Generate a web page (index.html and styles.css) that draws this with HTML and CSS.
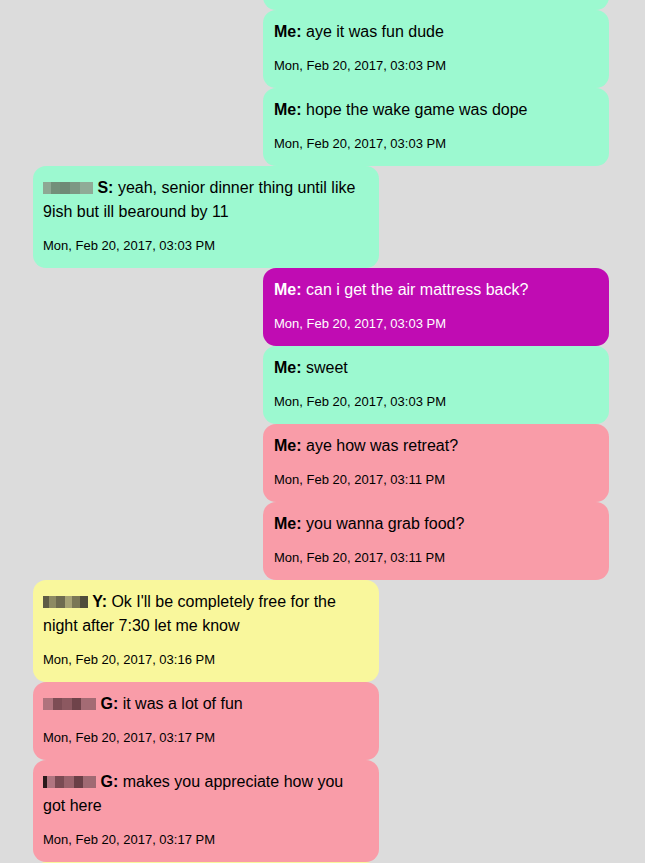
FILE: index.html
```html
<!DOCTYPE html>
<html>
<head>
<meta charset="utf-8">
<link rel="stylesheet" href="styles.css">
</head>
<body>
<div class="thread">
  <div class="msg me green">
    <div class="text"><b>Me:</b> lol</div>
    <div class="time">Mon, Feb 20, 2017, 03:03 PM</div>
  </div>
  <div class="msg me green">
    <div class="text"><b>Me:</b> aye it was fun dude</div>
    <div class="time">Mon, Feb 20, 2017, 03:03 PM</div>
  </div>
  <div class="msg me green">
    <div class="text"><b>Me:</b> hope the wake game was dope</div>
    <div class="time">Mon, Feb 20, 2017, 03:03 PM</div>
  </div>
  <div class="msg them green">
    <div class="text"><b><span class="blur blur-s"></span> S:</b> yeah, senior dinner thing until like 9ish but ill bearound by 11</div>
    <div class="time">Mon, Feb 20, 2017, 03:03 PM</div>
  </div>
  <div class="msg me purple">
    <div class="text"><b>Me:</b> can i get the air mattress back?</div>
    <div class="time">Mon, Feb 20, 2017, 03:03 PM</div>
  </div>
  <div class="msg me green">
    <div class="text"><b>Me:</b> sweet</div>
    <div class="time">Mon, Feb 20, 2017, 03:03 PM</div>
  </div>
  <div class="msg me pink">
    <div class="text"><b>Me:</b> aye how was retreat?</div>
    <div class="time">Mon, Feb 20, 2017, 03:11 PM</div>
  </div>
  <div class="msg me pink">
    <div class="text"><b>Me:</b> you wanna grab food?</div>
    <div class="time">Mon, Feb 20, 2017, 03:11 PM</div>
  </div>
  <div class="msg them yellow">
    <div class="text"><b><span class="blur blur-y"></span> Y:</b> Ok I'll be completely free for the night after 7:30 let me know</div>
    <div class="time">Mon, Feb 20, 2017, 03:16 PM</div>
  </div>
  <div class="msg them pink">
    <div class="text"><b><span class="blur blur-g"></span> G:</b> it was a lot of fun</div>
    <div class="time">Mon, Feb 20, 2017, 03:17 PM</div>
  </div>
  <div class="msg them pink">
    <div class="text"><b><span class="blur blur-g2"></span> G:</b> makes you appreciate how you got here</div>
    <div class="time">Mon, Feb 20, 2017, 03:17 PM</div>
  </div>
  <div class="msg them yellow">
    <div class="text"><b><span class="blur blur-y"></span> Y:</b> yeah</div>
    <div class="time">Mon, Feb 20, 2017, 03:18 PM</div>
  </div>
</div>
</body>
</html>
```
FILE: styles.css
```css
html, body {
  margin: 0;
  padding: 0;
  background: #dcdcdc;
  font-family: "Liberation Sans", Arial, Helvetica, sans-serif;
  overflow: hidden;
}

.thread {
  width: 576px;
  margin: -68px 0 0 33px;
  display: flex;
  flex-direction: column;
}

.msg {
  width: 346px;
  box-sizing: border-box;
  padding: 10px 10px 15px 11px;
  border-radius: 13px;
  color: #000;
}

.msg.me {
  align-self: flex-end;
}

.msg.them {
  align-self: flex-start;
  padding-left: 10px;
}

.text {
  font-size: 16px;
  line-height: 24px;
}

.time {
  font-size: 13px;
  line-height: 14px;
  margin-top: 15px;
}

.green { background: #9cf9d0; }
.pink { background: #f99ca8; }
.yellow { background: #f9f79c; }
.purple { background: #c00cb3; color: #fff; }

.blur {
  display: inline-block;
  height: 12px;
  vertical-align: -1px;
  filter: blur(0.6px);
}

.blur-s {
  width: 50px;
  background: linear-gradient(90deg, #8ea894 0 15%, #738f7a 15% 35%, #6f8a76 35% 55%, #7d9884 55% 75%, #90ab97 75% 100%);
}

.blur-y {
  width: 45px;
  background: linear-gradient(90deg, #5e5c45 0 14%, #8d8a63 14% 30%, #6e6b50 30% 48%, #a6a275 48% 64%, #7a7756 64% 82%, #4f4d3b 82% 100%);
}

.blur-g {
  width: 53px;
  background: linear-gradient(90deg, #b0737d 0 18%, #7d4d55 18% 36%, #8c5860 36% 54%, #6f434a 54% 72%, #a46b74 72% 100%);
}

.blur-g2 {
  width: 53px;
  background: linear-gradient(90deg, #2a1a1c 0 7%, #b07580 7% 22%, #7a4b53 22% 40%, #9a636c 40% 58%, #6a4047 58% 76%, #a06a73 76% 100%);
}
```
